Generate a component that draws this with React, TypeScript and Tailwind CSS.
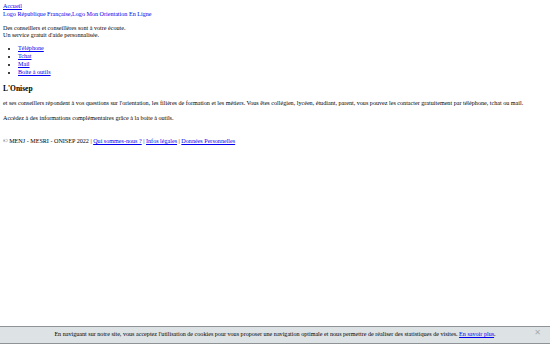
export default function App() {
  return (
    <div className="min-h-[344px] bg-white px-[3px] pt-[3px] font-['Liberation_Serif'] text-[6.12px] leading-[7.8px] text-black">
      <div>
        <a href="#" className="text-[#0000ee] underline">
          Accueil
        </a>
      </div>
      <div>
        <a href="#" className="text-[#0000ee] underline decoration-transparent">
          Logo République Française,Logo Mon Orientation En Ligne
        </a>
      </div>

      <p className="mt-[6px]">
        Des conseillers et conseillères sont à votre écoute.
        <br />
        Un service gratuit d'aide personnalisée.
      </p>

      <ul className="mt-[5px] list-disc pl-[15px]">
        {["Téléphone", "Tchat", "Mail", "Boite à outils"].map((item) => (
          <li key={item}>
            <a href="#" className="text-[#0000ee] underline">
              {item}
            </a>
          </li>
        ))}
      </ul>

      <h2 className="mt-[8px] text-[7.5px] font-bold leading-[10px]">L'Onisep</h2>

      <p className="mt-[6px]">
        et ses conseillers répondent à vos questions sur l'orientation, les filières de formation et les métiers. Vous êtes
        collégien, lycéen, étudiant, parent, vous pouvez les contacter gratuitement par téléphone, tchat ou mail.
      </p>
      <p className="mt-[7px]">Accédez à des informations complémentaires grâce à la boite à outils.</p>

      <p className="mt-[15px]">
        © MENJ - MESRI - ONISEP 2022 |{" "}
        <a href="#" className="text-[#0000ee] underline">
          Qui sommes-nous ?
        </a>{" "}
        |{" "}
        <a href="#" className="text-[#0000ee] underline">
          Infos légales
        </a>{" "}
        |{" "}
        <a href="#" className="text-[#0000ee] underline">
          Données Personnelles
        </a>
      </p>

      <div className="fixed inset-x-0 bottom-0 flex h-[18px] items-center justify-center border-y border-[#8f9396] bg-[#dde2e5] text-center">
        <span>
          En naviguant sur notre site, vous acceptez l'utilisation de cookies pour vous proposer une navigation optimale et nous
          permettre de réaliser des statistiques de visites.{" "}
          <a href="#" className="text-[#0000ee] underline">
            En savoir plus
          </a>
          .
        </span>
        <span className="absolute right-[9px] top-[2px] font-['DejaVu_Sans'] text-[8px] text-[#a8adb1]">✕</span>
      </div>
    </div>
  );
}
